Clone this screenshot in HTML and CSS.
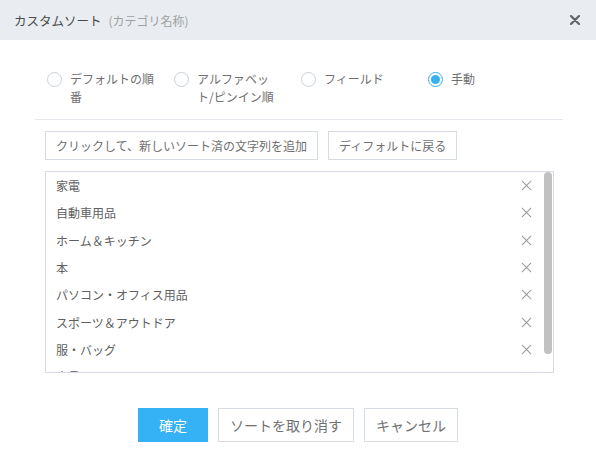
FILE: index.html
```html
<!DOCTYPE html>
<html lang="ja">
<head>
<meta charset="utf-8">
<link rel="stylesheet" href="styles.css">
</head>
<body>
<div class="dialog">
  <div class="header">
    <span class="title">カスタムソート</span>
    <span class="subtitle">(カテゴリ名称)</span>
    <span class="close">
      <svg width="10" height="10" viewBox="0 0 10 10"><path d="M1 1L9 9M9 1L1 9" stroke="#5f6368" stroke-width="2.2" stroke-linecap="round"/></svg>
    </span>
  </div>
  <div class="radios">
    <label class="radio"><span class="circle"></span><span class="rtext">デフォルトの順<br>番</span></label>
    <label class="radio"><span class="circle"></span><span class="rtext">アルファベッ<br>ト/ピンイン順</span></label>
    <label class="radio"><span class="circle"></span><span class="rtext">フィールド</span></label>
    <label class="radio"><span class="circle checked"></span><span class="rtext">手動</span></label>
  </div>
  <div class="divider"></div>
  <div class="tools">
    <button class="btn">クリックして、新しいソート済の文字列を追加</button>
    <button class="btn">ディフォルトに戻る</button>
  </div>
  <div class="list">
    <div class="row"><span>家電</span><span class="x"></span></div>
    <div class="row"><span>自動車用品</span><span class="x"></span></div>
    <div class="row"><span>ホーム＆キッチン</span><span class="x"></span></div>
    <div class="row"><span>本</span><span class="x"></span></div>
    <div class="row"><span>パソコン・オフィス用品</span><span class="x"></span></div>
    <div class="row"><span>スポーツ＆アウトドア</span><span class="x"></span></div>
    <div class="row"><span>服・バッグ</span><span class="x"></span></div>
    <div class="row"><span>家具・インテリア</span><span class="x"></span></div>
    <div class="scrollbar"></div>
  </div>
  <div class="footer">
    <button class="fbtn primary">確定</button>
    <button class="fbtn">ソートを取り消す</button>
    <button class="fbtn">キャンセル</button>
  </div>
</div>
</body>
</html>
```
FILE: styles.css
```css
* { box-sizing: border-box; }
html, body { margin: 0; padding: 0; background: #fff; }
body {
  font-family: "Noto Sans CJK JP", "Noto Sans", sans-serif;
  color: #555;
  width: 596px;
  height: 454px;
  overflow: hidden;
}
.dialog { width: 596px; }
.header {
  height: 40px;
  background: #e9edf1;
  display: flex;
  align-items: center;
  padding: 0 14px 0 14px;
}
.title { font-size: 12.5px; color: #4a4a4a; }
.subtitle { font-size: 12px; color: #a0a0a0; margin-left: 7px; }
.close { margin-left: auto; width: 10px; height: 10px; display: flex; margin-right: 2px; }
.radios {
  margin-top: 30px;
  padding-left: 47px;
  display: grid;
  grid-template-columns: 127px 127px 127px 127px;
  font-size: 12px;
  color: #707070;
  height: 36px;
}
.radio { display: flex; align-items: flex-start; gap: 8px; line-height: 18px; }
.circle {
  width: 15px; height: 15px;
  border: 1px solid #c9d1da;
  border-radius: 50%;
  margin-top: 2px;
  flex: none;
  display: flex; align-items: center; justify-content: center;
}
.circle.checked { border-color: #35b1f3; }
.circle.checked::after {
  content: "";
  width: 9px; height: 9px; border-radius: 50%;
  background: #35b1f3;
}
.rtext { white-space: nowrap; }
.divider {
  margin: 13px 0 0 35px;
  width: 528px;
  height: 1px;
  background: #e3e7eb;
}
.tools {
  margin: 11px 0 0 45px;
  display: flex;
  gap: 10px;
}
.btn {
  height: 29px;
  padding: 0 10px;
  border: 1px solid #d6dce2;
  background: #fff;
  font-family: inherit;
  font-size: 12px;
  color: #707070;
}
.list {
  position: relative;
  margin: 11px 0 0 45px;
  width: 509px;
  height: 202px;
  border: 1px solid #d6dce2;
  overflow: hidden;
}
.row {
  height: 27.33px;
  display: flex;
  align-items: center;
  justify-content: space-between;
  padding: 0 21px 0 10px;
  font-size: 12px;
  color: #606060;
}
.x {
  width: 11px; height: 11px;
  position: relative;
}
.x::before, .x::after {
  content: "";
  position: absolute;
  left: -1px; top: 5px;
  width: 13px; height: 1px;
  background: #9a9a9a;
  transform: rotate(45deg);
}
.x::after { transform: rotate(-45deg); }
.scrollbar {
  position: absolute;
  right: 1px;
  top: 0;
  width: 8px;
  height: 182px;
  border-radius: 4px;
  background: #c1c1c1;
}
.footer {
  margin-top: 35px;
  display: flex;
  justify-content: center;
  gap: 10px;
}
.fbtn {
  height: 34px;
  padding: 0 11px;
  border: 1px solid #d6dce2;
  background: #fff;
  font-family: inherit;
  font-size: 14px;
  color: #707070;
}
.fbtn.primary {
  padding: 0 20px;
  background: #35b1f5;
  border-color: #35b1f5;
  color: #fff;
}
```
